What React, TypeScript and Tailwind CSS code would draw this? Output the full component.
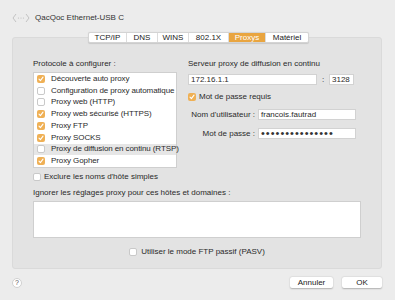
import React from 'react'

const protocols = [
  { name: 'Découverte auto proxy', on: true },
  { name: 'Configuration de proxy automatique', on: false },
  { name: 'Proxy web (HTTP)', on: false },
  { name: 'Proxy web sécurisé (HTTPS)', on: true },
  { name: 'Proxy FTP', on: true },
  { name: 'Proxy SOCKS', on: true },
  { name: 'Proxy de diffusion en continu (RTSP)', on: false, selected: true },
  { name: 'Proxy Gopher', on: true },
]

const tabs = [
  { name: 'TCP/IP', w: 'w-[37px]' },
  { name: 'DNS', w: 'w-[31px]' },
  { name: 'WINS', w: 'w-[31px]' },
  { name: '802.1X', w: 'w-[40px]' },
  { name: 'Proxys', w: 'w-[37px]', active: true },
  { name: 'Matériel', w: 'w-[43px]' },
]

const Check = ({ on }: { on: boolean }) =>
  on ? (
    <span className="flex h-[8px] w-[8px] shrink-0 items-center justify-center rounded-[2px] bg-[#efb055]">
      <svg width="6" height="6" viewBox="0 0 6 6">
        <path d="M1 3.2 L2.4 4.6 L5 1.2" fill="none" stroke="white" strokeWidth="1.1" strokeLinecap="round" strokeLinejoin="round" />
      </svg>
    </span>
  ) : (
    <span className="h-[8px] w-[8px] shrink-0 rounded-[2px] border border-[#c9c9c9] bg-white" />
  )

const Field = ({ value, className }: { value: string; className: string }) => (
  <div className={`flex h-[11px] items-center overflow-hidden whitespace-nowrap border border-[#d2d2d2] bg-white pl-[2px] leading-none ${className}`}>
    {value}
  </div>
)

export default function App() {
  return (
    <div className="relative h-[300px] w-[395px] overflow-hidden bg-[#ececec] text-[8px] leading-[10px] text-[#2a2a2a] font-['Liberation_Sans',Arial,sans-serif]">
      {/* header */}
      <div className="flex h-[32px] items-start pl-[12px] pt-[13px]">
        <svg width="18" height="10" viewBox="0 0 18 10">
          <path d="M4 1 L1 5 L4 9" fill="none" stroke="#bdbdbd" strokeWidth="0.9" />
          <path d="M14 1 L17 5 L14 9" fill="none" stroke="#bdbdbd" strokeWidth="0.9" />
          <circle cx="6.5" cy="5" r="0.6" fill="#bdbdbd" />
          <circle cx="9" cy="5" r="0.6" fill="#bdbdbd" />
          <circle cx="11.5" cy="5" r="0.6" fill="#bdbdbd" />
        </svg>
        <span className="ml-[5px] text-[#333]">QacQoc Ethernet-USB C</span>
      </div>

      {/* tabs */}
      <div className="relative z-10 ml-[88px] flex h-[11px] w-fit overflow-hidden rounded-[2px] border border-[#d4d4d4] bg-white shadow-[0_0.5px_1px_rgba(0,0,0,0.12)]">
        {tabs.map((t, i) => (
          <div
            key={t.name}
            className={`flex ${t.w} items-center justify-center leading-none ${i > 0 ? 'border-l border-[#dcdcdc]' : ''} ${t.active ? 'bg-[#e9a540] text-white' : 'text-[#222]'}`}
          >
            {t.name}
          </div>
        ))}
      </div>

      {/* panel */}
      <div className="-mt-[6px] ml-[12px] h-[232px] w-[370px] rounded-[3px] border border-[#dadada] bg-[#e3e3e3] pl-[20px] pt-[21px]">
        <div className="flex">
          {/* left column */}
          <div className="w-[144px]">
            <div>Protocole à configurer :</div>
            <div className="mt-[3px] h-[96px] border border-[#cfcfcf] bg-white">
              {protocols.map((p) => (
                <div
                  key={p.name}
                  className={`flex h-[11.75px] items-center pl-[3px] ${p.selected ? 'bg-[#e6e6e6]' : ''}`}
                >
                  <Check on={p.on} />
                  <span className="ml-[6px] whitespace-nowrap tracking-[-0.1px]">{p.name}</span>
                </div>
              ))}
            </div>
          </div>

          {/* right column */}
          <div className="ml-[11px] w-[170px]">
            <div>Serveur proxy de diffusion en continu</div>
            <div className="mt-[5px] flex items-center">
              <Field value="172.16.1.1" className="w-[129px]" />
              <span className="w-[12px] text-center leading-none">:</span>
              <Field value="3128" className="w-[25px]" />
            </div>
            <div className="mt-[7px] flex h-[10px] items-center">
              <Check on />
              <span className="ml-[3px]">Mot de passe requis</span>
            </div>
            <div className="mt-[7px] flex items-center">
              <span className="w-[67px] text-right">Nom d'utilisateur :</span>
              <Field value="francois.fautrad" className="ml-[3px] w-[98px]" />
            </div>
            <div className="mt-[8px] flex items-center">
              <span className="w-[67px] text-right">Mot de passe :</span>
              <Field value="•••••••••••••••" className="ml-[3px] w-[98px] text-[11px] tracking-[1px] text-[#333]" />
            </div>
          </div>
        </div>

        <div className="mt-[4px] flex h-[10px] items-center">
          <Check on={false} />
          <span className="ml-[3px]">Exclure les noms d'hôte simples</span>
        </div>
        <div className="mt-[6px]">Ignorer les réglages proxy pour ces hôtes et domaines :</div>
        <div className="mt-[3px] h-[37px] w-[328px] border border-[#cfcfcf] bg-white" />
        <div className="mt-[9px] flex h-[10px] w-[328px] items-center justify-center">
          <Check on={false} />
          <span className="ml-[4px]">Utiliser le mode FTP passif (PASV)</span>
        </div>
      </div>

      {/* footer */}
      <div className="mt-[8px] flex items-center pl-[12px] pr-[13px]">
        <div className="flex h-[10px] w-[10px] items-center justify-center rounded-full border border-[#d0d0d0] bg-white text-[7px] leading-none text-[#555]">
          ?
        </div>
        <div className="ml-auto flex gap-[9px]">
          <button className="h-[11px] w-[43px] rounded-[2px] bg-white text-[8px] leading-none text-[#222] shadow-[0_0.5px_1.5px_rgba(0,0,0,0.25)]">
            Annuler
          </button>
          <button className="h-[11px] w-[40px] rounded-[2px] bg-white text-[8px] leading-none text-[#222] shadow-[0_0.5px_1.5px_rgba(0,0,0,0.25)]">
            OK
          </button>
        </div>
      </div>
    </div>
  )
}
